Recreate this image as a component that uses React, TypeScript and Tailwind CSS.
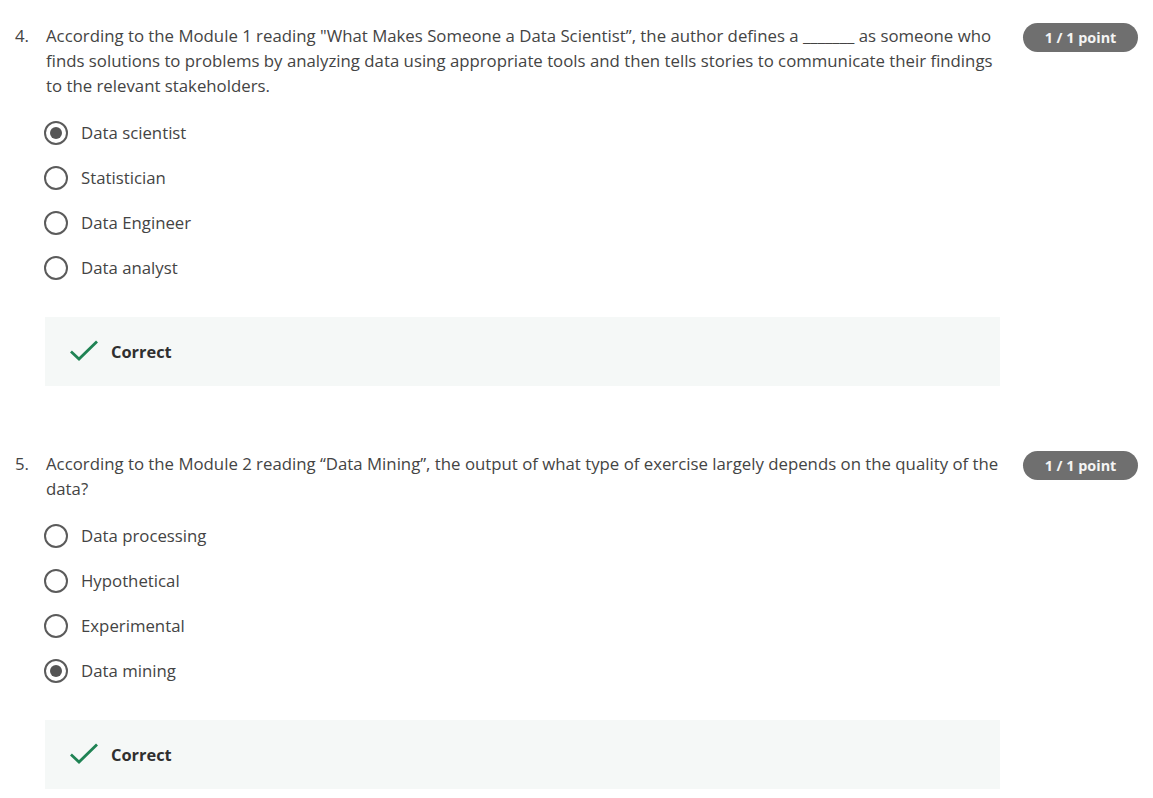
import React from 'react';

type Question = {
  num: number;
  text: React.ReactNode;
  options: string[];
  selected: number;
};

const QUESTIONS: Question[] = [
  {
    num: 4,
    text: (
      <>
        According to the Module 1 reading "What Makes Someone a Data Scientist”, the author defines a _______ as someone who
        finds solutions to problems by analyzing data using appropriate tools and then tells stories to communicate their
        findings to the relevant stakeholders.
      </>
    ),
    options: ['Data scientist', 'Statistician', 'Data Engineer', 'Data analyst'],
    selected: 0,
  },
  {
    num: 5,
    text: (
      <>
        According to the Module 2 reading “Data Mining”, the output of what type of exercise largely depends on the quality of
        the data?
      </>
    ),
    options: ['Data processing', 'Hypothetical', 'Experimental', 'Data mining'],
    selected: 3,
  },
];

function Radio({ checked }: { checked: boolean }) {
  return (
    <span className="flex h-6 w-6 shrink-0 items-center justify-center rounded-full border-2 border-[#5b5b5b] bg-white">
      {checked && <span className="h-3 w-3 rounded-full bg-[#555555]" />}
    </span>
  );
}

function CheckIcon() {
  return (
    <svg width="28" height="22" viewBox="0 0 28 22" fill="none">
      <path d="M2 12.5 L9 19 L26 2.5" stroke="#1f8354" strokeWidth="2.8" strokeLinecap="square" />
    </svg>
  );
}

function QuestionBlock({ q }: { q: Question }) {
  return (
    <div>
      <div className="flex items-start">
        <span className="w-[31px] shrink-0">{q.num}.</span>
        <p className="w-[955px] shrink-0">{q.text}</p>
        <span className="ml-[22px] flex h-[29px] w-[115px] shrink-0 items-center justify-center rounded-full bg-[#6f6f6f] text-[14.4px] font-bold text-[#f4f4f4]">
          1 / 1 point
        </span>
      </div>
      <div className="ml-[29px] mt-3">
        {q.options.map((opt, i) => (
          <div key={opt} className="flex h-[45px] items-center gap-[13px]">
            <Radio checked={i === q.selected} />
            <span>{opt}</span>
          </div>
        ))}
      </div>
      <div className="ml-[30px] mt-[26.5px] flex h-[69px] w-[955px] items-center bg-[#f5f8f7] pl-[25px]">
        <CheckIcon />
        <span className="ml-[13px] text-[16.4px] font-bold text-[#2f2f2f]">Correct</span>
      </div>
    </div>
  );
}

export default function App() {
  return (
    <div
      className="min-h-screen bg-white pl-[15px] pt-[23px] text-[16.8px] leading-[25px] text-[#444444]"
      style={{ fontFamily: '"Open Sans", "Noto Sans", sans-serif' }}
    >
      <div className="flex flex-col gap-[65.5px]">
        {QUESTIONS.map((q) => (
          <QuestionBlock key={q.num} q={q} />
        ))}
      </div>
    </div>
  );
}
